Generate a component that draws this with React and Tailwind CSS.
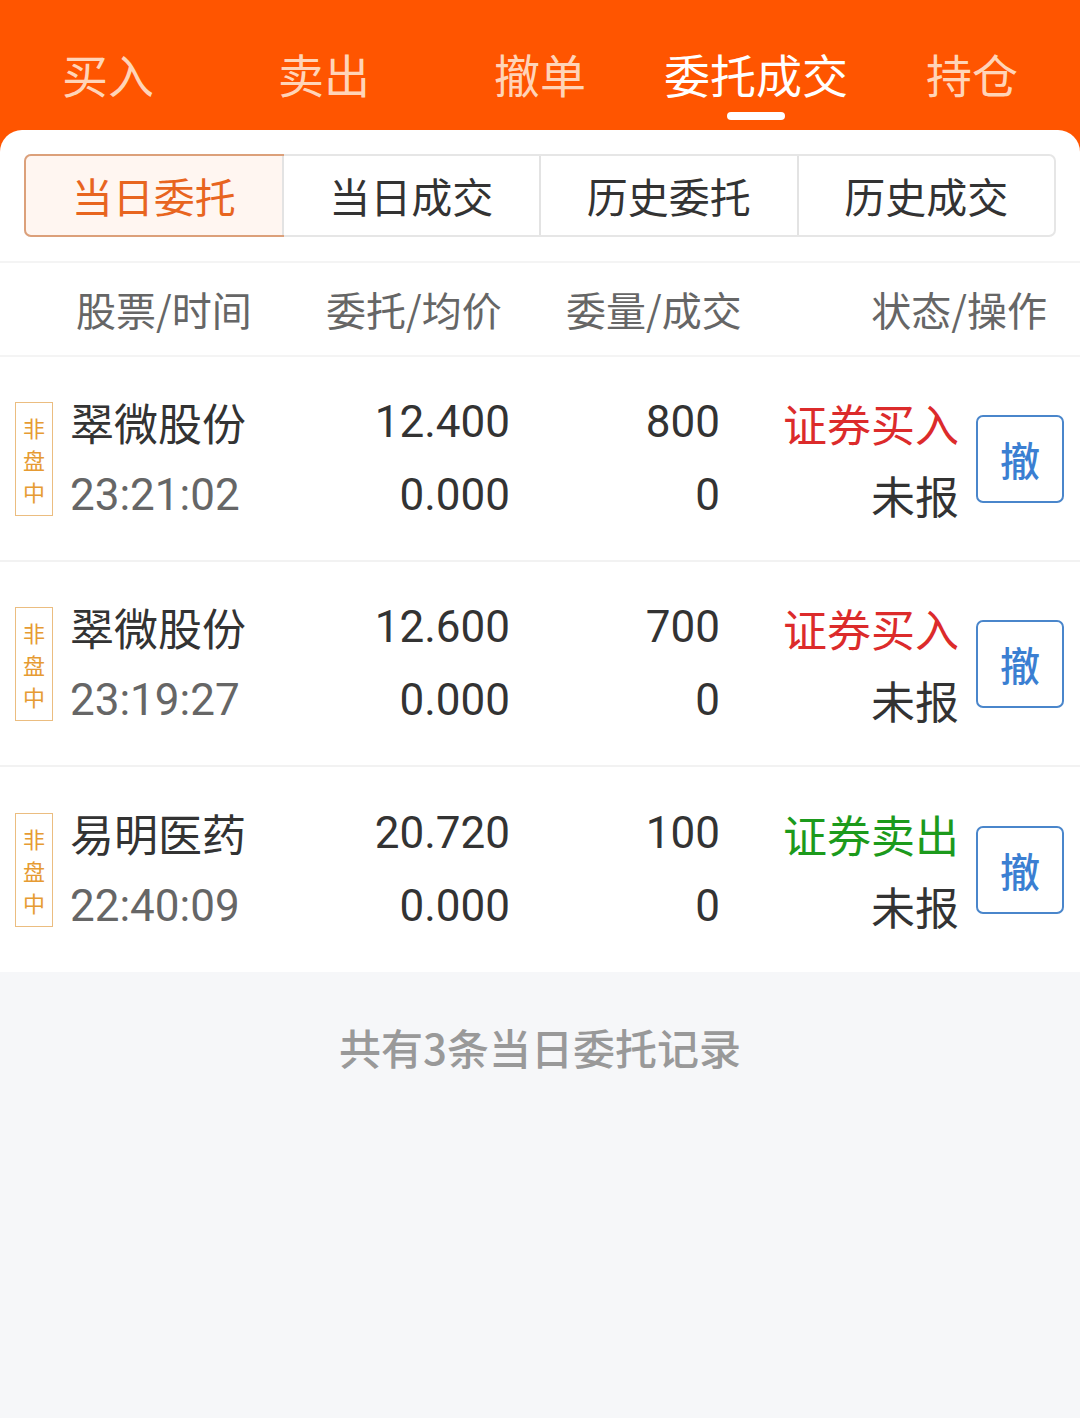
import React from 'react'

const TOP_TABS = ['买入', '卖出', '撤单', '委托成交', '持仓']
const SUB_TABS = ['当日委托', '当日成交', '历史委托', '历史成交']

const ORDERS = [
  { name: '翠微股份', time: '23:21:02', price: '12.400', avg: '0.000', qty: '800', deal: '0', side: '证券买入', buy: true },
  { name: '翠微股份', time: '23:19:27', price: '12.600', avg: '0.000', qty: '700', deal: '0', side: '证券买入', buy: true },
  { name: '易明医药', time: '22:40:09', price: '20.720', avg: '0.000', qty: '100', deal: '0', side: '证券卖出', buy: false },
]

const CJK = { fontFamily: '"Noto Sans CJK SC", "Noto Sans", sans-serif' }
const NUM = { fontFamily: 'Roboto, "Noto Sans CJK SC", sans-serif' }

function OrderRow({ o, last }) {
  return (
    <div className={`flex items-center h-[205px] pl-[15px] pr-[16px] ${last ? '' : 'border-b-2 border-[#f2f2f2]'}`}>
      {/* 非盘中 标记 */}
      <div
        className="w-[38px] h-[114px] border-[1.5px] border-[#ebbd80] flex flex-col items-center justify-center text-[22px] leading-[32px] text-[#e69b33] shrink-0"
        style={CJK}
      >
        <span>非</span>
        <span>盘</span>
        <span>中</span>
      </div>

      <div className="ml-[17px] w-[230px] flex flex-col">
        <span className="text-[44px] leading-[72px] text-[#333]" style={CJK}>{o.name}</span>
        <span className="text-[44px] leading-[74px] text-[#666]" style={NUM}>{o.time}</span>
      </div>

      <div className="w-[210px] flex flex-col items-end text-[44px] text-[#333]" style={NUM}>
        <span className="leading-[72px]">{o.price}</span>
        <span className="leading-[74px]">{o.avg}</span>
      </div>

      <div className="w-[210px] flex flex-col items-end text-[44px] text-[#333]" style={NUM}>
        <span className="leading-[72px]">{o.qty}</span>
        <span className="leading-[74px]">{o.deal}</span>
      </div>

      <div className="w-[239px] flex flex-col items-end text-[44px] leading-[72px]" style={CJK}>
        <span className={o.buy ? 'text-[#dc2b2b]' : 'text-[#1c9a1c]'}>{o.side}</span>
        <span className="text-[#333]">未报</span>
      </div>

      <button
        className="ml-auto w-[88px] h-[88px] border-2 border-[#4a86cb] rounded-[7px] text-[40px] font-medium text-[#3b7fd2] flex items-center justify-center"
        style={CJK}
      >
        撤
      </button>
    </div>
  )
}

export default function App() {
  return (
    <div className="w-[1080px] min-h-[1418px] bg-[#f6f7f9]" style={CJK}>
      <div className="bg-[#ff5500]">
        {/* 顶部交易标签 */}
        <div className="h-[130px] flex">
          {TOP_TABS.map((t, i) => (
            <div key={t} className="w-1/5 flex flex-col items-center pt-[41px]">
              <span className={`text-[46px] leading-[64px] ${i === 3 ? 'text-white' : 'text-[#ffd4b8]'}`}>{t}</span>
              {i === 3 && <span className="mt-[7px] w-[58px] h-[8px] rounded-full bg-white" />}
            </div>
          ))}
        </div>

        {/* 白色卡片 */}
        <div className="bg-white rounded-t-[22px]">
          <div className="pt-[24px] px-[24px] pb-[24px]">
            <div className="flex h-[83px] rounded-[7px] border-2 border-[#e6e6e6]">
              {SUB_TABS.map((t, i) => (
                <div
                  key={t}
                  className={`flex-1 flex items-center justify-center text-[41px] ${
                    i === 0
                      ? '-m-[2px] border-2 border-[#dca07a] bg-[#fff6f1] text-[#e8651f] rounded-l-[7px]'
                      : 'text-[#333] border-l-2 border-[#e3e3e3]'
                  } ${i === 1 ? 'border-l-0' : ''}`}
                >
                  {t}
                </div>
              ))}
            </div>
          </div>

          {/* 表头 */}
          <div className="flex items-center h-[96px] pl-[76px] pr-[33px] border-y-2 border-[#f4f4f4] text-[40px] text-[#666]">
            <span className="w-[250px]">股票/时间</span>
            <span className="w-[240px]">委托/均价</span>
            <span>委量/成交</span>
            <span className="ml-auto">状态/操作</span>
          </div>

          {ORDERS.map((o, i) => (
            <OrderRow key={o.time} o={o} last={i === ORDERS.length - 1} />
          ))}
        </div>
      </div>

      <div className="pt-[50px] text-center text-[42px] leading-[50px] font-medium text-[#999]">
        共有3条当日委托记录
      </div>
    </div>
  )
}
